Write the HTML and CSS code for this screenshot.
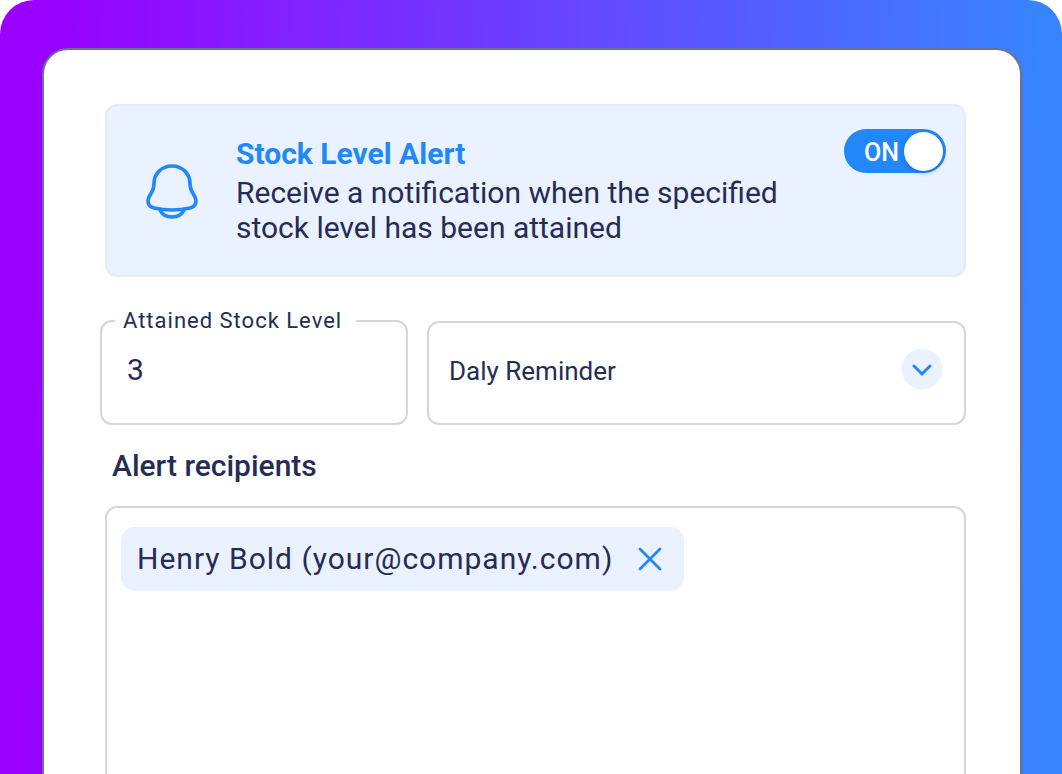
FILE: index.html
```html
<!DOCTYPE html>
<html lang="en">
<head>
<meta charset="utf-8">
<meta name="viewport" content="width=device-width, initial-scale=1">
<title>Stock Level Alert</title>
<link rel="stylesheet" href="styles.css">
</head>
<body>
<div class="stage">
  <main class="panel">
    <section class="alert">
      <svg class="alert-icon" viewBox="0 0 52 56" fill="none" stroke="currentColor" stroke-width="3.6" stroke-linejoin="round" stroke-linecap="round" aria-hidden="true">
        <path d="M26 2C15.500 2 8 9.800 8 19.500C8 24.500 7.500 26 5 29.500C3 32.500 2 34 2 37C2 40.700 4.300 43.100 8 44C19.500 46.600 32.500 46.600 44 44C47.700 43.100 50 40.700 50 37C50 34 49 32.500 47 29.500C44.500 26 44 24.500 44 19.500C44 9.800 36.500 2 26 2Z"/>
        <path d="M14 46C16 50.500 20.500 53 26 53C31.500 53 36 50.500 38 46"/>
      </svg>
      <div class="alert-body">
        <h1 class="alert-title">Stock Level Alert</h1>
        <p class="alert-text">Receive a notification when the specified stock level has been attained</p>
      </div>
      <label class="switch">
        <span class="switch-text">ON</span>
        <input class="switch-input" type="checkbox" role="switch" aria-label="Stock Level Alert" checked>
      </label>
    </section>
    <div class="fields">
      <fieldset class="field">
        <legend class="field-legend"><label for="level">Attained Stock Level</label></legend>
        <input class="field-input" id="level" type="text" inputmode="numeric" value="3">
      </fieldset>
      <div class="dropdown">
        <select class="dropdown-select" aria-label="Reminder frequency">
          <option>Daly Reminder</option>
        </select>
        <svg class="dropdown-icon" viewBox="0 0 42 42" fill="none" aria-hidden="true">
          <circle cx="21" cy="21" r="20.500" fill="#eaf1ff"/>
          <path d="M13 18L21 26L29 18" stroke="#2288fa" stroke-width="3" stroke-linecap="round"/>
        </svg>
      </div>
    </div>
    <h2 class="heading">Alert recipients</h2>
    <div class="recipients">
      <div class="chip">
        <span class="chip-text">Henry Bold (your@company.com)</span>
        <button class="chip-remove" type="button" aria-label="Remove Henry Bold">
          <svg class="chip-icon" viewBox="0 0 24 24" fill="none" stroke="currentColor" stroke-width="2.800" stroke-linecap="round" aria-hidden="true">
            <path d="M2 2L22 22M22 2L2 22"/>
          </svg>
        </button>
      </div>
    </div>
  </main>
</div>
</body>
</html>
```
FILE: styles.css
```css
* {
  box-sizing: border-box;
}

body {
  margin: 0;
  background: #fff;
  color: #252c55;
  font-family: Roboto, "Liberation Sans", sans-serif;
  font-size: 30px;
}

input,
select,
button {
  font-family: inherit;
  color: inherit;
}

.stage {
  display: flex;
  flex-direction: column;
  min-height: 100vh;
  padding: 48px 40px 0 42px;
  border-radius: 34px 34px 0 0;
  background: linear-gradient(92deg, #9900ff 4%, #3884ff 96%);
}

.panel {
  display: flex;
  flex: 1;
  flex-direction: column;
  padding: 54px 54px 0 56px;
  border: 2px solid #6c7090;
  border-bottom: 0;
  border-radius: 26px 26px 0 0;
  background: #fff;
}

.alert {
  display: flex;
  align-items: flex-start;
  margin-left: 5px;
  padding: 23px 18px 30px 39px;
  border: 2px solid #e5ecf5;
  border-radius: 12px;
  background: #eaf1ff;
}

.alert-icon {
  flex: none;
  width: 52px;
  height: 56px;
  margin-top: 35px;
  color: #2288fa;
}

.alert-body {
  flex: 1;
  padding: 7px 48px 0 38px;
}

.alert-title {
  margin: 0 0 4px;
  color: #2288fa;
  font-size: 30px;
  font-weight: 700;
  line-height: 35px;
}

.alert-text {
  margin: 0;
  line-height: 35px;
}

.switch {
  display: flex;
  align-items: center;
  justify-content: space-between;
  width: 102px;
  height: 44px;
  padding: 2px 3px 2px 20px;
  border-radius: 22px;
  background: #2288fa;
}

.switch-text {
  padding-top: 2px;
  color: #fff;
  font-size: 25px;
  font-weight: 500;
}

.switch-input {
  flex: none;
  width: 39px;
  height: 39px;
  margin: 0;
  border-radius: 50%;
  background: #fff;
  box-shadow: 0 2px 4px #1c3a7a55;
  appearance: none;
}

.fields {
  display: grid;
  grid-template-columns: 4fr 7fr;
  align-items: end;
  gap: 19px;
  margin-top: 28px;
}

.field {
  min-width: 0;
  margin: 0;
  padding: 14px 24px 36px 13px;
  border: 2px solid #d6d6d6;
  border-radius: 12px;
}

.field-legend {
  padding: 0 14px 0 8px;
  font-size: 22px;
  letter-spacing: 1px;
  line-height: 32px;
}

.field-input {
  display: block;
  width: 100%;
  height: 36px;
  padding: 0 12px;
  border: 0;
  background: none;
  font-size: 30px;
  outline: 0;
}

.dropdown {
  position: relative;
}

.dropdown-select {
  display: block;
  width: 100%;
  height: 104px;
  padding: 0 64px 4px 20px;
  border: 2px solid #d6d6d6;
  border-radius: 12px;
  background: #fff;
  font-size: 26px;
  appearance: none;
}

.dropdown-icon {
  position: absolute;
  top: 27px;
  right: 23px;
  width: 42px;
  height: 42px;
  pointer-events: none;
}

.heading {
  margin: 22px 12px;
  font-size: 30px;
  font-weight: 500;
  line-height: 37px;
}

.recipients {
  flex: 1;
  margin-left: 5px;
  padding: 19px 14px;
  border: 2px solid #d6d6d6;
  border-bottom: 0;
  border-radius: 12px 12px 0 0;
}

.chip {
  display: inline-flex;
  align-items: center;
  gap: 25px;
  height: 64px;
  padding: 0 22px 0 16px;
  border-radius: 14px;
  background: #eaf1ff;
}

.chip-text {
  padding-bottom: 2px;
  letter-spacing: 1px;
}

.chip-remove {
  display: flex;
  padding: 0;
  border: 0;
  background: none;
  color: #2288fa;
}

.chip-icon {
  width: 24px;
  height: 24px;
}
```
